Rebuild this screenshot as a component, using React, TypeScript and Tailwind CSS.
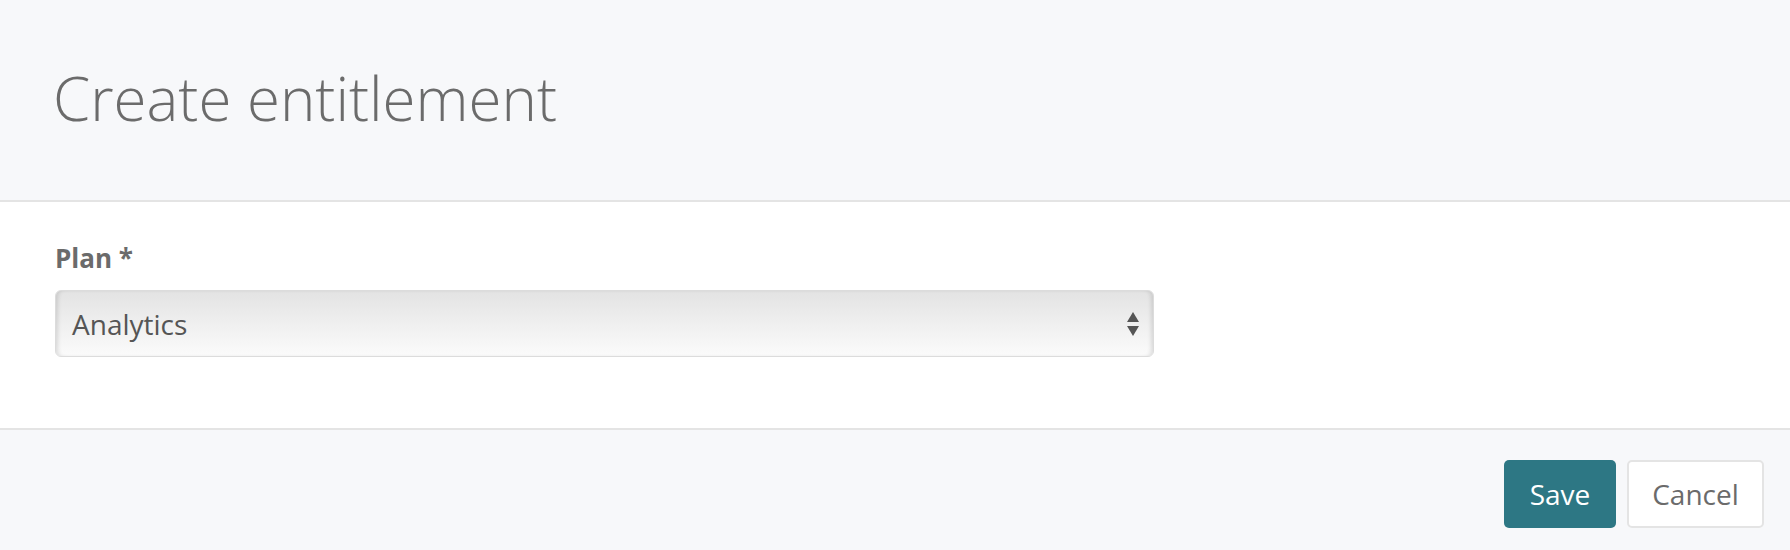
export default function App() {
  return (
    <div className="w-[1790px] h-[550px] flex flex-col bg-white font-['Open_Sans',sans-serif] overflow-hidden">
      {/* Header */}
      <div className="h-[202px] shrink-0 flex items-center pl-[53px] pb-[4px] bg-[#f7f8fa] border-b-2 border-[#e4e4e4]">
        <h1 className="text-[60px] leading-none font-light text-[#6b6b6b]">Create entitlement</h1>
      </div>

      {/* Body */}
      <div className="h-[228px] shrink-0 pt-[43px] px-[55px] border-b-2 border-[#e4e4e4]">
        <label className="block text-[26px] leading-none font-bold text-[#6b6b6b]">Plan *</label>
        <div className="relative mt-[19px] w-[1099px] h-[67px] flex items-center pl-[16px] rounded-[6px] border border-[#dcdcdc] bg-gradient-to-b from-[#e3e3e3] via-[#efefef] to-[#fbfbfb] shadow-[inset_4px_0_4px_-2px_rgba(0,0,0,0.12),inset_-4px_0_4px_-2px_rgba(0,0,0,0.12)]">
          <span className="text-[28px] leading-none text-[#555555]">Analytics</span>
          <svg className="absolute right-[13px] top-1/2 -translate-y-1/2" width="14" height="26" viewBox="0 0 14 26">
            <path d="M7 1 L13 11 L1 11 Z" fill="#555555" />
            <path d="M1 15 L13 15 L7 25 Z" fill="#555555" />
          </svg>
        </div>
      </div>

      {/* Footer */}
      <div className="flex-1 flex items-start justify-end gap-[11px] pt-[30px] pr-[26px] bg-[#f7f8fa]">
        <button className="h-[68px] w-[112px] rounded-[5px] bg-[#2d7784] text-white text-[28px] leading-none">Save</button>
        <button className="h-[68px] w-[137px] rounded-[5px] bg-white border-2 border-[#e4e4e4] text-[#6b6b6b] text-[28px] leading-none">Cancel</button>
      </div>
    </div>
  )
}
